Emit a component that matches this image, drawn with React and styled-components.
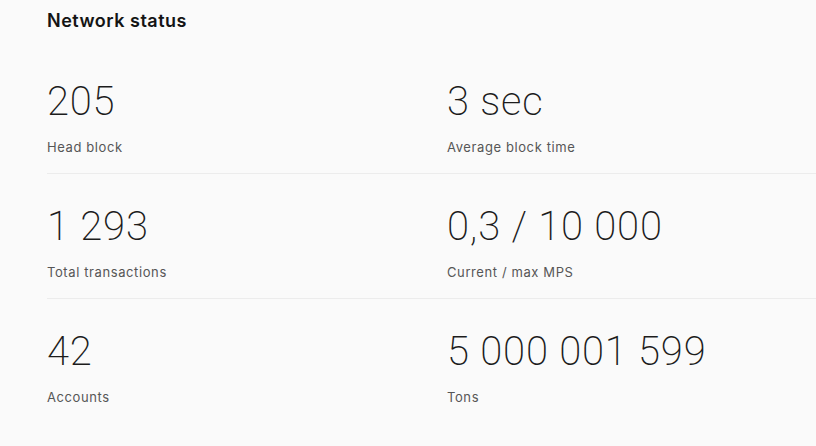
import React from "react";
import styled, { createGlobalStyle } from "styled-components";

const Global = createGlobalStyle`
  html, body { margin: 0; padding: 0; background: #fafafa; }
  body { font-family: Inter, "Noto Sans", sans-serif; color: #1b1b1b; }
`;

const Page = styled.section`
  padding: 9px 0 0 47px;
  box-sizing: border-box;
  min-height: 446px;
  background: #fafafa;
`;

const Title = styled.h2`
  margin: 0 0 16px;
  font-family: Inter, sans-serif;
  font-weight: 600;
  font-size: 18px;
  line-height: 24px;
  letter-spacing: 0.5px;
  color: #141414;
`;

const Row = styled.div`
  display: grid;
  grid-template-columns: 400px 1fr;
  padding: 33px 0 18px;
  border-bottom: 1px solid ${(p) => (p.$last ? "transparent" : "#ececec")};
`;

const Stat = styled.div`
  display: flex;
  flex-direction: column;
  gap: 17px;
`;

const Value = styled.div`
  font-family: Roboto, sans-serif;
  font-weight: 200;
  font-size: 40px;
  line-height: 40px;
  letter-spacing: 0.8px;
  color: #1c1c1c;
`;

const Label = styled.div`
  font-family: Inter, sans-serif;
  font-size: 13px;
  line-height: 16px;
  color: #565656;
  letter-spacing: 0.6px;
`;

const rows = [
  [["205", "Head block"], ["3 sec", "Average block time"]],
  [["1 293", "Total transactions"], ["0,3 / 10 000", "Current / max MPS"]],
  [["42", "Accounts"], ["5 000 001 599", "Tons"]],
];

export default function App() {
  return (
    <Page>
      <Global />
      <Title>Network status</Title>
      {rows.map((r, i) => (
        <Row key={i} $last={i === rows.length - 1}>
          {r.map(([v, l]) => (
            <Stat key={l}>
              <Value>{v}</Value>
              <Label>{l}</Label>
            </Stat>
          ))}
        </Row>
      ))}
    </Page>
  );
}
